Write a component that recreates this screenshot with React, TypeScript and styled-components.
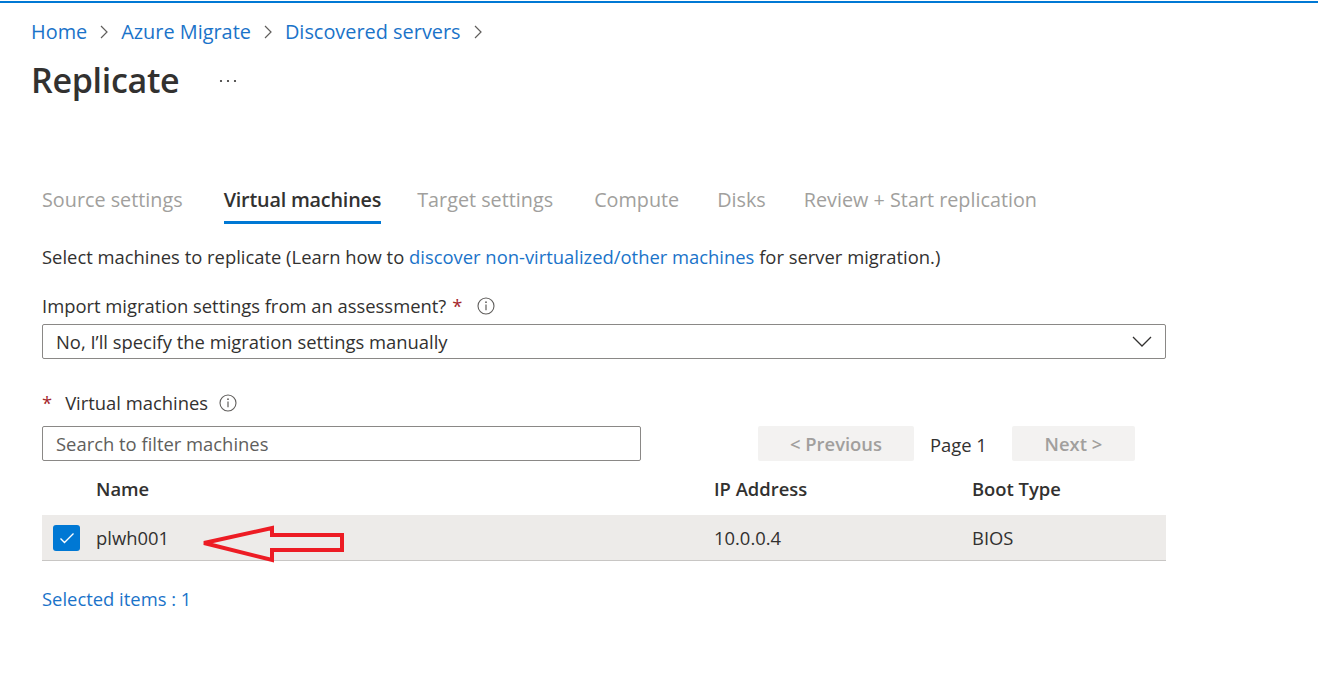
import React from "react";
import styled, { createGlobalStyle } from "styled-components";

const GlobalStyle = createGlobalStyle`
  html, body { margin: 0; padding: 0; background: #ffffff; }
  body {
    font-family: "Open Sans", "Noto Sans", "Liberation Sans", sans-serif;
    color: #323130;
  }
`;

const FS = "18.4px";

const Page = styled.div`
  width: 1318px;
  min-height: 673px;
  background: #fff;
`;

const TopLine = styled.div`
  margin-top: 1px;
  height: 2px;
  background: #0078d4;
`;

const Header = styled.header`
  padding-left: 31px;
`;

const Breadcrumb = styled.nav`
  display: flex;
  align-items: center;
  margin-top: 15px;
  height: 28px;
  font-size: 19.9px;
  line-height: 28px;
`;

const Crumb = styled.span`
  color: #1a73c9;
`;

const Sep = styled.span`
  display: inline-flex;
  align-items: center;
  margin: 0 13px 0 13px;
  color: #605e5c;
`;

const TitleRow = styled.div`
  display: flex;
  align-items: center;
  margin-top: 12px;
  height: 44px;
`;

const Title = styled.h1`
  margin: 0;
  font-size: 34px;
  font-weight: 600;
  line-height: 44px;
  color: #323130;
  letter-spacing: -0.3px;
`;

const More = styled.span`
  display: inline-flex;
  margin-left: 40px;
  margin-top: 2px;
`;

const Content = styled.main`
  padding-left: 42px;
  width: 1124px;
  position: relative;
`;

const Tabs = styled.div`
  display: flex;
  margin-top: 84px;
  height: 38px;
`;

const Tab = styled.div<{ $active?: boolean; $gap: number }>`
  margin-right: ${(p) => p.$gap}px;
  font-size: 19.8px;
  line-height: 28px;
  height: 28px;
  padding-bottom: 7px;
  border-bottom: 3px solid ${(p) => (p.$active ? "#0078d4" : "transparent")};
  color: ${(p) => (p.$active ? "#323130" : "#a19f9d")};
  font-weight: ${(p) => (p.$active ? 600 : 400)};
  letter-spacing: ${(p) => (p.$active ? "-0.2px" : "0")};
  white-space: nowrap;
`;

const Text = styled.p`
  margin: 20px 0 0;
  font-size: ${FS};
  line-height: 26px;
  color: #323130;
  white-space: nowrap;
`;

const Link = styled.span`
  color: #1a73c9;
`;

const FieldLabel = styled.div<{ $top: number }>`
  display: flex;
  align-items: center;
  margin-top: ${(p) => p.$top}px;
  height: 26px;
  font-size: ${FS};
  line-height: 26px;
  color: #323130;
  white-space: nowrap;
`;

const Star = styled.span<{ $before?: boolean }>`
  color: #a4262c;
  margin-left: ${(p) => (p.$before ? 0 : 6)}px;
  margin-right: ${(p) => (p.$before ? 13 : 0)}px;
`;

const InfoWrap = styled.span<{ $ml: number }>`
  display: inline-flex;
  margin-left: ${(p) => p.$ml}px;
`;

const Dropdown = styled.div`
  margin-top: 5px;
  box-sizing: border-box;
  height: 35px;
  width: 1124px;
  border: 1px solid #8a8886;
  border-radius: 2px;
  display: flex;
  align-items: center;
  justify-content: space-between;
  padding: 0 13px 0 13px;
  font-size: ${FS};
  color: #323130;
`;

const ToolRow = styled.div`
  display: flex;
  align-items: center;
  margin-top: 10px;
  height: 35px;
`;

const SearchBox = styled.div`
  box-sizing: border-box;
  width: 599px;
  height: 35px;
  border: 1px solid #8a8886;
  border-radius: 2px;
  display: flex;
  align-items: center;
  padding-left: 13px;
  font-size: ${FS};
  color: #605e5c;
`;

const Pager = styled.div`
  display: flex;
  align-items: center;
  margin-left: 117px;
`;

const PageButton = styled.div<{ $w: number }>`
  width: ${(p) => p.$w}px;
  height: 35px;
  background: #f3f2f1;
  border-radius: 2px;
  display: flex;
  align-items: center;
  justify-content: center;
  font-size: ${FS};
  font-weight: 600;
  color: #a19f9d;
`;

const PageLabel = styled.span`
  font-size: ${FS};
  color: #323130;
  margin: 2px 25px 0 16px;
`;

const Grid = styled.div`
  display: grid;
  grid-template-columns: 54px 618px 258px 194px;
  align-items: center;
`;

const HeadRow = styled(Grid)`
  height: 54px;
  font-size: ${FS};
  font-weight: 600;
  color: #323130;
`;

const DataRow = styled(Grid)`
  position: relative;
  height: 45px;
  background: #edebe9;
  border-bottom: 1px solid #c8c6c4;
  font-size: ${FS};
  color: #323130;
`;

const Cell = styled.div`
  white-space: nowrap;
`;

const CheckCell = styled.div`
  display: flex;
  padding-left: 11px;
`;

const Checkbox = styled.span`
  width: 27px;
  height: 26px;
  border-radius: 3px;
  background: #0078d4;
  display: inline-flex;
  align-items: center;
  justify-content: center;
`;

const Arrow = styled.svg`
  position: absolute;
  left: 159px;
  top: 10px;
`;

const Selected = styled.div`
  margin-top: 25px;
  font-size: ${FS};
  line-height: 26px;
  color: #1a73c9;
`;

const Chevron = () => (
  <svg width="8" height="14" viewBox="0 0 8 14">
    <path d="M1 1 L7 7 L1 13" fill="none" stroke="#605e5c" strokeWidth="1.2" />
  </svg>
);

const Info = () => (
  <svg width="18" height="18" viewBox="0 0 18 18">
    <circle cx="9" cy="9" r="8" fill="none" stroke="#605e5c" strokeWidth="1.1" />
    <circle cx="9" cy="5.2" r="0.9" fill="#605e5c" />
    <path d="M9 7.6 V13.2" stroke="#605e5c" strokeWidth="1.2" />
  </svg>
);

export default function App() {
  return (
    <Page>
      <GlobalStyle />
      <TopLine />
      <Header>
        <Breadcrumb>
          <Crumb>Home</Crumb>
          <Sep><Chevron /></Sep>
          <Crumb>Azure Migrate</Crumb>
          <Sep><Chevron /></Sep>
          <Crumb>Discovered servers</Crumb>
          <Sep><Chevron /></Sep>
        </Breadcrumb>
        <TitleRow>
          <Title>Replicate</Title>
          <More>
            <svg width="18" height="4" viewBox="0 0 18 4">
              <circle cx="2" cy="2" r="1.1" fill="#323130" />
              <circle cx="9" cy="2" r="1.1" fill="#323130" />
              <circle cx="16" cy="2" r="1.1" fill="#323130" />
            </svg>
          </More>
        </TitleRow>
      </Header>
      <Content>
        <Tabs>
          <Tab $gap={41}>Source settings</Tab>
          <Tab $gap={36} $active>Virtual machines</Tab>
          <Tab $gap={41}>Target settings</Tab>
          <Tab $gap={38}>Compute</Tab>
          <Tab $gap={38}>Disks</Tab>
          <Tab $gap={0}>Review + Start replication</Tab>
        </Tabs>
        <Text>
          Select machines to replicate (Learn how to <Link>discover non-virtualized/other machines</Link> for server migration.)
        </Text>
        <FieldLabel $top={23}>
          Import migration settings from an assessment?<Star>*</Star>
          <InfoWrap $ml={15}><Info /></InfoWrap>
        </FieldLabel>
        <Dropdown>
          <span>No, I’ll specify the migration settings manually</span>
          <svg width="20" height="11" viewBox="0 0 20 11">
            <path d="M1 1 L10 10 L19 1" fill="none" stroke="#323130" strokeWidth="1.3" />
          </svg>
        </Dropdown>
        <FieldLabel $top={31}>
          <Star $before>*</Star>Virtual machines
          <InfoWrap $ml={11}><Info /></InfoWrap>
        </FieldLabel>
        <ToolRow>
          <SearchBox>Search to filter machines</SearchBox>
          <Pager>
            <PageButton $w={156}>&lt; Previous</PageButton>
            <PageLabel>Page 1</PageLabel>
            <PageButton $w={123}>Next &gt;</PageButton>
          </Pager>
        </ToolRow>
        <HeadRow>
          <Cell />
          <Cell>Name</Cell>
          <Cell>IP Address</Cell>
          <Cell>Boot Type</Cell>
        </HeadRow>
        <DataRow>
          <CheckCell>
            <Checkbox>
              <svg width="16" height="12" viewBox="0 0 16 12">
                <path d="M1.5 6.5 L5.5 10.5 L14.5 1.5" fill="none" stroke="#fff" strokeWidth="1.4" />
              </svg>
            </Checkbox>
          </CheckCell>
          <Cell>plwh001</Cell>
          <Cell>10.0.0.4</Cell>
          <Cell>BIOS</Cell>
          <Arrow width="146" height="40" viewBox="0 0 146 40">
            <polygon
              points="3,18 71,3 71,10 141,10 141,25 71,25 71,35"
              fill="none"
              stroke="#ed1c24"
              strokeWidth="4"
              strokeLinejoin="miter"
            />
          </Arrow>
        </DataRow>
        <Selected>Selected items : 1</Selected>
      </Content>
    </Page>
  );
}
